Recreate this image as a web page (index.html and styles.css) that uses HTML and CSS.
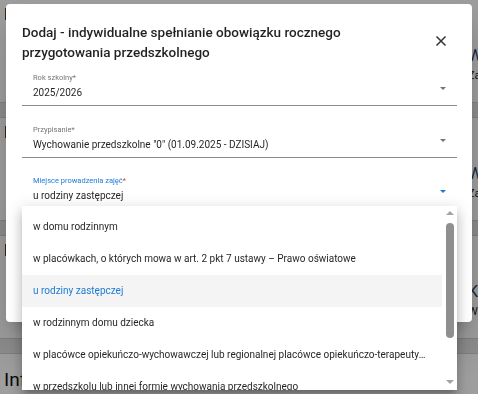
FILE: index.html
```html
<!DOCTYPE html>
<html lang="pl">
<head>
  <meta charset="UTF-8">
  <meta name="viewport" content="width=device-width, initial-scale=1.0">
  <title>Dodaj - indywidualne spełnianie obowiązku</title>
  <link rel="stylesheet" href="styles.css">
</head>
<body>
  <!-- strona pod dialogiem -->
  <div class="page">
    <div class="section">
      <div class="sec-mark"></div>
      <div class="sec-side">
        <div class="sec-title">Wybór</div>
        <div class="sec-sub">Zaznacz</div>
      </div>
    </div>
    <div class="band"></div>
    <div class="section">
      <div class="sec-mark"></div>
      <div class="sec-side">
        <div class="sec-title">Wniosek</div>
        <div class="sec-sub">Zaznacz</div>
      </div>
    </div>
    <div class="band"></div>
    <div class="section">
      <div class="sec-mark"></div>
      <div class="sec-side">
        <div class="sec-title">KI</div>
        <div class="sec-sub">Wybrane</div>
      </div>
    </div>
    <div class="band"></div>
    <h3 class="page-heading">Informacje o obowiązku</h3>
  </div>

  <div class="backdrop"></div>

  <div class="dialog">
    <div class="dialog-head">
      <h2 class="dialog-title">Dodaj - indywidualne spełnianie obowiązku rocznego<br>przygotowania przedszkolnego</h2>
      <button class="close-btn" aria-label="Zamknij">
        <svg width="12" height="12" viewBox="0 0 12 12"><path d="M1.5 1.5 L10.5 10.5 M10.5 1.5 L1.5 10.5" stroke="#333" stroke-width="1.5" fill="none"/></svg>
      </button>
    </div>

    <div class="field">
      <div class="field-label">Rok szkolny*</div>
      <div class="field-row">
        <span class="field-value">2025/2026</span>
        <span class="arrow"></span>
      </div>
    </div>

    <div class="field">
      <div class="field-label">Przypisanie*</div>
      <div class="field-row">
        <span class="field-value">Wychowanie przedszkolne "0" (01.09.2025 - DZISIAJ)</span>
        <span class="arrow"></span>
      </div>
    </div>

    <div class="field focused">
      <div class="field-label">Miejsce prowadzenia zajęć<span class="req">*</span></div>
      <div class="field-row">
        <span class="field-value">u rodziny zastępczej</span>
        <span class="arrow"></span>
      </div>
    </div>
  </div>

  <div class="panel">
    <div class="options">
      <div class="option">w domu rodzinnym</div>
      <div class="option">w placówkach, o których mowa w art. 2 pkt 7 ustawy – Prawo oświatowe</div>
      <div class="option selected">u rodziny zastępczej</div>
      <div class="option">w rodzinnym domu dziecka</div>
      <div class="option">w placówce opiekuńczo-wychowawczej lub regionalnej placówce opiekuńczo-terapeutycznej</div>
      <div class="option">w przedszkolu lub innej formie wychowania przedszkolnego</div>
    </div>
    <div class="scrollbar">
      <span class="sb-up"></span>
      <span class="sb-thumb"></span>
      <span class="sb-down"></span>
    </div>
  </div>
</body>
</html>
```

FILE: styles.css
```css
body {
  margin: 0;
  padding: 0;
  font-family: Roboto, "Liberation Sans", sans-serif;
  background-color: #fff;
  overflow: hidden;
}

/* tlo strony */
.page {
  width: 478px;
  height: 394px;
}

.section {
  height: 102px;
  display: flex;
  justify-content: space-between;
  padding-top: 8px;
  box-sizing: border-box;
}

.sec-mark {
  width: 2px;
  height: 12px;
  margin-left: 5px;
  background-color: #6b3a12;
}

.sec-side {
  width: 10px;
  overflow: hidden;
  padding-top: 38px;
  white-space: nowrap;
}

.sec-title {
  font-size: 16px;
  color: #1a3a6a;
}

.sec-sub {
  font-size: 11px;
  color: #222;
  margin-top: 4px;
}

.band {
  height: 14px;
  background-color: #e4e4e4;
  border-top: 1px solid #d0d0d0;
  border-bottom: 1px solid #d0d0d0;
}

.page-heading {
  margin: 14px 0 0 4px;
  font-size: 19px;
  font-weight: 400;
  color: #111;
}

.backdrop {
  position: fixed;
  inset: 0;
  background-color: rgba(0, 0, 0, 0.38);
}

/* dialog */
.dialog {
  position: absolute;
  left: 6px;
  top: 4px;
  width: 466px;
  height: 318px;
  box-sizing: border-box;
  padding: 18px 15px 0 16px;
  background-color: #fff;
  border-radius: 4px;
  box-shadow: 0 11px 15px -7px rgba(0, 0, 0, 0.2), 0 24px 38px 3px rgba(0, 0, 0, 0.14);
}

.dialog-head {
  display: flex;
  justify-content: space-between;
  align-items: flex-start;
}

.dialog-title {
  margin: 0;
  font-size: 13.5px;
  font-weight: 500;
  line-height: 20px;
  color: rgba(0, 0, 0, 0.87);
}

.close-btn {
  width: 24px;
  height: 24px;
  margin: 7px 4px 0 0;
  padding: 0;
  border: none;
  background: none;
  display: flex;
  align-items: center;
  justify-content: center;
}

.field {
  margin-top: 18px;
  padding: 0 11px 5px 11px;
  border-bottom: 1px solid #8c8c8c;
}

.dialog-head + .field {
  margin-top: 10px;
}

.field.focused {
  margin-top: 17px;
}

.field-label {
  font-size: 7.5px;
  line-height: 12px;
  color: #757575;
}

.field-row {
  display: flex;
  justify-content: space-between;
  align-items: center;
  height: 16px;
}

.field-value {
  font-size: 10px;
  color: rgba(0, 0, 0, 0.87);
}

.arrow {
  width: 0;
  height: 0;
  margin: 0 0 8px 0;
  border-left: 3.5px solid transparent;
  border-right: 3.5px solid transparent;
  border-top: 3.5px solid #757575;
}

.field.focused {
  border-bottom: 2px solid #1f7ad6;
  padding-bottom: 5px;
}

.field.focused .field-label {
  color: #1f7ad6;
}

.field.focused .arrow {
  border-top-color: #1f7ad6;
}

.req {
  color: #e53935;
}

/* lista wyboru */
.panel {
  position: absolute;
  left: 22px;
  top: 206px;
  width: 435px;
  height: 184px;
  display: flex;
  background-color: #fff;
  overflow: hidden;
  box-shadow: 0 5px 5px -3px rgba(0, 0, 0, 0.2), 0 8px 10px 1px rgba(0, 0, 0, 0.14), 0 3px 14px 2px rgba(0, 0, 0, 0.12);
}

.options {
  flex: 1;
  min-width: 0;
  padding-top: 5px;
}

.option {
  height: 32px;
  line-height: 32px;
  padding: 0 12px 0 11px;
  font-size: 10px;
  color: rgba(0, 0, 0, 0.87);
  white-space: nowrap;
  overflow: hidden;
  text-overflow: ellipsis;
}

.option.selected {
  background-color: #f4f4f4;
  color: #1f7ad6;
}

.scrollbar {
  width: 15px;
  display: flex;
  flex-direction: column;
  align-items: center;
}

.sb-up {
  margin-top: 5px;
  width: 0;
  height: 0;
  border-left: 4px solid transparent;
  border-right: 4px solid transparent;
  border-bottom: 4px solid #a3a3a3;
}

.sb-thumb {
  margin-top: 8px;
  width: 8px;
  height: 115px;
  border-radius: 4px;
  background-color: #8f8f8f;
}

.sb-down {
  margin-top: auto;
  margin-bottom: 6px;
  width: 0;
  height: 0;
  border-left: 4px solid transparent;
  border-right: 4px solid transparent;
  border-top: 4px solid #a3a3a3;
}
```
